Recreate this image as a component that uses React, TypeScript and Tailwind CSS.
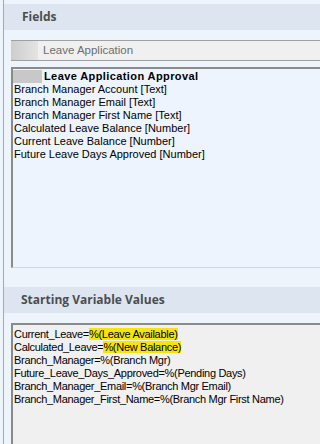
import React from "react";

const items = [
  "Branch Manager Account [Text]",
  "Branch Manager Email [Text]",
  "Branch Manager First Name [Text]",
  "Calculated Leave Balance [Number]",
  "Current Leave Balance [Number]",
  "Future Leave Days Approved [Number]",
];

export default function App() {
  return (
    <div className="w-[320px] h-[444px] bg-[#eef4fc] pl-[3px] overflow-hidden" style={{ fontFamily: '"Liberation Sans", Arial, sans-serif' }}>
      <div className="h-full border-l border-[#a8a8a8] pt-[4px] flex flex-col">
        <div className="h-[26px] bg-[#dde6f0] pl-[18px] flex items-center text-[12px] font-bold text-[#4d4d4d] shrink-0" style={{ fontFamily: '"Open Sans", sans-serif' }}>
          Fields
        </div>
        <div className="mt-[10px] ml-[7px] h-[21px] border-y border-[#a0a0a0] bg-[#f0f0f0] flex items-center shrink-0">
          <div className="w-[27px] h-full bg-gradient-to-r from-[#cdcdcd] to-[#e4e4e4]" />
          <span className="ml-[5px] text-[11.5px] text-[#6d6d6d]">Leave Application</span>
        </div>
        <div className="mt-[6px] ml-[7px] h-[201px] border-t-2 border-l-2 border-[#8a8a8a] border-b border-b-[#d6d6d6] bg-[#edf4fd] pt-[1px] shrink-0 text-[11px] leading-[13px] text-black">
          <div className="flex items-center h-[13px]">
            <div className="w-[29px] h-[13px] bg-[#c8c8c8]" />
            <span className="ml-[2px] font-bold tracking-[0.4px]">Leave Application Approval</span>
          </div>
          {items.map((t) => (
            <div key={t} className="pl-[1px] h-[13px]">{t}</div>
          ))}
        </div>
        <div className="mt-[19px] h-[26px] bg-[#dde6f0] pl-[17px] flex items-center text-[12px] font-bold text-[#4d4d4d] shrink-0" style={{ fontFamily: '"Open Sans", sans-serif' }}>
          Starting Variable Values
        </div>
        <div className="mt-[10px] ml-[7px] flex-1 border-t-2 border-l-2 border-[#8a8a8a] bg-[#f0f0f0] pt-[3px] pl-[1px] text-[11px] leading-[13px] tracking-[-0.3px] text-black">
          <div>Current_Leave=<span className="bg-[#f5e50a]">%(Leave Available)</span></div>
          <div>Calculated_Leave=<span className="bg-[#f5e50a]">%(New Balance)</span></div>
          <div>Branch_Manager=%(Branch Mgr)</div>
          <div>Future_Leave_Days_Approved=%(Pending Days)</div>
          <div>Branch_Manager_Email=%(Branch Mgr Email)</div>
          <div>Branch_Manager_First_Name=%(Branch Mgr First Name)</div>
        </div>
      </div>
    </div>
  );
}
